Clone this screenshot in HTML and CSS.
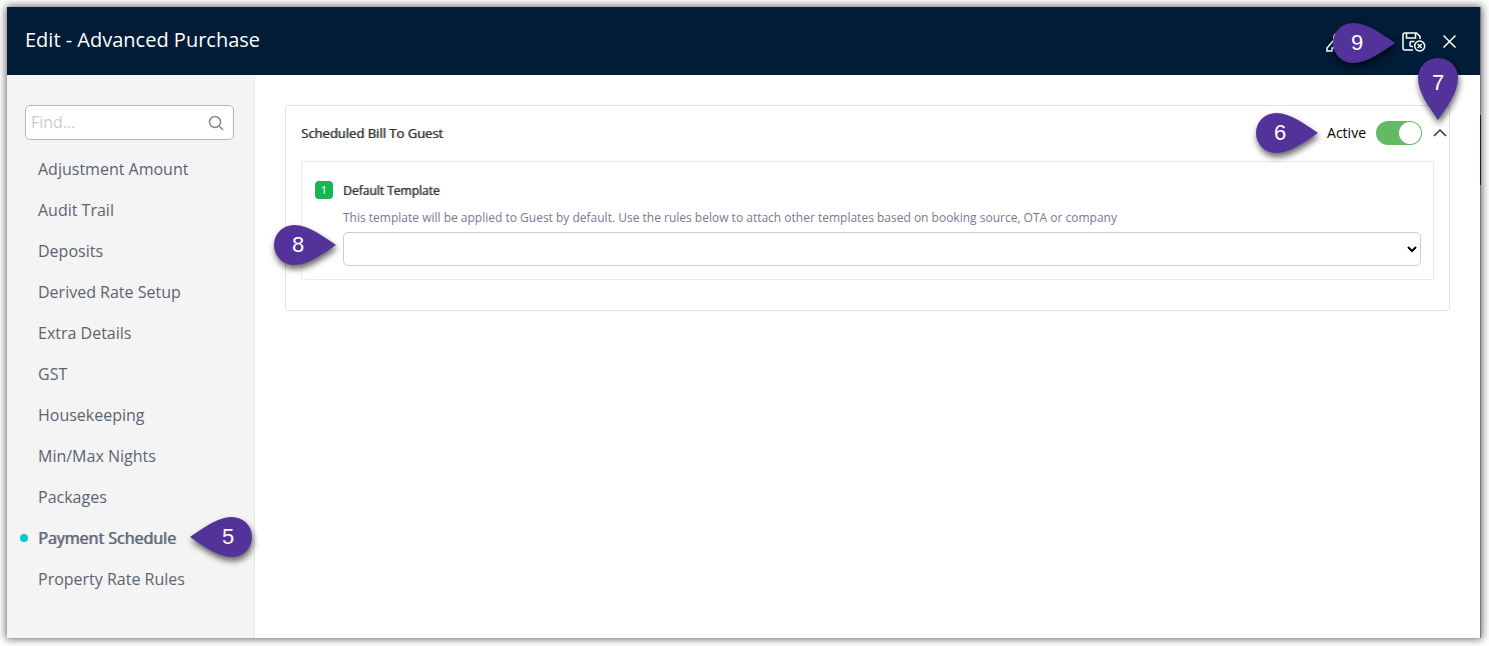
FILE: index.html
```html
<!DOCTYPE html>
<html lang="en">
<head>
    <meta charset="utf-8">
    <title>Edit - Advanced Purchase</title>
    <link rel="stylesheet" href="styles.css">
</head>

<body>
<svg class="defs" width="0" height="0">
    <symbol id="pin-right" viewBox="0 0 62 40">
        <path d="M62 20C50 12 35 0 20 0A20 20 0 0 0 20 40C35 40 50 28 62 20Z"/>
    </symbol>
    <symbol id="pin-left" viewBox="0 0 62 40">
        <path d="M0 20C12 12 27 0 42 0A20 20 0 0 1 42 40C27 40 12 28 0 20Z"/>
    </symbol>
    <symbol id="pin-down" viewBox="0 0 40 62">
        <path d="M20 62C12 50 0 35 0 20A20 20 0 0 1 40 20C40 35 28 50 20 62Z"/>
    </symbol>
</svg>

<div class="modal">
    <header class="modal-header">
        <h1>Edit - Advanced Purchase</h1>
        <div class="actions">
            <div class="anchor">
                <button class="icon-button" aria-label="Save">
                    <svg width="24" height="24" viewBox="0 0 24 24">
                        <path d="M13 4Q8 5 9 11L2 19V22H7V19H9V17L12 15"/>
                    </svg>
                </button>
                <div class="pin pin-right pin-save"><svg><use href="#pin-right"/></svg><span>9</span></div>
            </div>
            <button class="icon-button" aria-label="Save and exit">
                <svg width="24" height="24" viewBox="0 0 24 24">
                    <path d="M12 21H4Q2 21 2 19V6Q2 4 4 4H15.500L19 7.500V10M5.500 4V9H14.500V4"/>
                    <path d="M13.500 12.500H10.500Q9 12.500 9 14V16Q9 17.500 10.500 17.500H12"/>
                    <circle cx="18.700" cy="17" r="5"/>
                    <path d="M16.700 15L20.700 19M20.700 15L16.700 19"/>
                </svg>
            </button>
            <button class="icon-button" aria-label="Close">
                <svg width="24" height="24" viewBox="0 0 24 24">
                    <path d="M6.500 6.500L18.500 18.500M18.500 6.500L6.500 18.500"/>
                </svg>
            </button>
        </div>
    </header>

    <div class="modal-body">
        <aside class="sidebar">
            <div class="search">
                <input type="text" placeholder="Find..." aria-label="Find">
                <svg width="16" height="16" viewBox="0 0 16 16">
                    <circle cx="7" cy="7" r="5.500"/>
                    <path d="M11 11L15 15"/>
                </svg>
            </div>
            <nav class="menu">
                <a href="#">Adjustment Amount</a>
                <a href="#">Audit Trail</a>
                <a href="#">Deposits</a>
                <a href="#">Derived Rate Setup</a>
                <a href="#">Extra Details</a>
                <a href="#">GST</a>
                <a href="#">Housekeeping</a>
                <a href="#">Min/Max Nights</a>
                <a href="#">Packages</a>
                <div class="anchor">
                    <a href="#" class="active">Payment Schedule</a>
                    <div class="pin pin-left pin-menu"><svg><use href="#pin-left"/></svg><span>5</span></div>
                </div>
                <a href="#">Property Rate Rules</a>
            </nav>
        </aside>

        <main class="content">
            <section class="card">
                <div class="card-header">
                    <h2>Scheduled Bill To Guest</h2>
                    <div class="toggle anchor">
                        <label for="active">Active</label>
                        <input type="checkbox" class="switch" id="active" checked>
                        <div class="pin pin-right pin-active"><svg><use href="#pin-right"/></svg><span>6</span></div>
                    </div>
                    <div class="anchor">
                        <button class="collapse" aria-label="Collapse">
                            <svg width="14" height="10" viewBox="0 0 14 10">
                                <path d="M1 8L7 2L13 8"/>
                            </svg>
                        </button>
                        <div class="pin pin-down"><svg><use href="#pin-down"/></svg><span>7</span></div>
                    </div>
                </div>
                <div class="panel">
                    <span class="step">1</span>
                    <div class="field">
                        <label for="template">Default Template</label>
                        <p>This template will be applied to Guest by default. Use the rules below to attach other templates based on booking source, OTA or company</p>
                        <div class="anchor">
                            <select id="template"><option></option></select>
                            <div class="pin pin-right pin-template"><svg><use href="#pin-right"/></svg><span>8</span></div>
                        </div>
                    </div>
                </div>
            </section>
        </main>
    </div>
</div>
</body>
</html>
```
FILE: styles.css
```css
* {
    box-sizing: border-box;
}

body {
    margin: 0;
    padding: 7px 8px 8px 7px;
    min-height: 100vh;
    display: flex;
    background-color: #ffffff;
    font-family: "Open Sans", sans-serif;
    overflow-x: hidden;
}

.defs {
    position: absolute;
}

.modal {
    flex: 1;
    display: flex;
    flex-direction: column;
    position: relative;
    background-color: #ffffff;
    border-right: 1px solid #777777;
    box-shadow: 0 0 8px 1px #666666;
}

/* edge of the page behind the dialog */
.modal::after {
    content: "";
    position: absolute;
    right: -1px;
    top: 108px;
    width: 1px;
    height: 70px;
    background-color: #0c2033;
}

.modal-header {
    display: flex;
    justify-content: space-between;
    align-items: center;
    height: 68px;
    padding: 0 18px;
    background-color: #001c37;
    color: #ffffff;
}

.modal-header h1 {
    margin: 0;
    padding-bottom: 4px;
    font-size: 20px;
    font-weight: 400;
}

.actions {
    display: flex;
    gap: 12px;
    padding-right: 1px;
}

.actions .anchor {
    margin-right: 40px;
}

.anchor {
    position: relative;
}

.icon-button {
    display: block;
    width: 24px;
    height: 24px;
    padding: 0;
    border: 0;
    background: none;
    cursor: pointer;
}

svg {
    display: block;
}

.icon-button svg,
.search svg,
.collapse svg {
    fill: none;
    stroke: #ffffff;
    stroke-width: 1.5;
    overflow: visible;
}

.modal-body {
    flex: 1;
    display: flex;
}

.sidebar {
    width: 248px;
    padding: 30px 20px 0 18px;
    background-color: #f4f4f4;
    border-right: 1px solid #e8e8e8;
}

.search {
    display: flex;
    align-items: center;
    height: 35px;
    padding: 0 9px 0 5px;
    background-color: #ffffff;
    border: 1px solid #b5b5b5;
    border-radius: 5px;
}

.search input {
    flex: 1;
    min-width: 0;
    padding: 0 0 2px;
    border: 0;
    outline: none;
    background: none;
    font-family: inherit;
    font-size: 16px;
}

.search input::placeholder {
    color: #cccccc;
}

.search svg {
    stroke: #888888;
}

.menu {
    margin-top: 9px;
}

.menu a {
    display: block;
    padding-left: 13px;
    line-height: 41px;
    font-size: 16px;
    color: #5b6472;
    text-decoration: none;
}

.menu a.active {
    text-shadow: 1px 0 rgba(91, 100, 114, 0.7);
}

.menu a.active::before {
    content: "";
    position: absolute;
    left: -5px;
    top: 16px;
    width: 8px;
    height: 8px;
    border-radius: 50%;
    background-color: #00c8d7;
}

.content {
    flex: 1;
    padding: 30px;
}

.card {
    padding: 0 15px 30px;
    border: 1px solid #e0e1e5;
    border-radius: 3px;
}

.card-header {
    display: flex;
    align-items: center;
    height: 55px;
    margin-right: -13px;
    padding-bottom: 2px;
}

.card-header h2 {
    flex: 1;
    margin: 0;
    font-size: 13px;
    font-weight: 400;
    color: #333333;
    text-shadow: 1px 0 rgba(51, 51, 51, 0.6);
}

.toggle {
    display: flex;
    align-items: center;
    gap: 10px;
    margin-right: 11px;
    font-size: 14px;
}

.switch {
    appearance: none;
    width: 46px;
    height: 24px;
    margin: 0;
    padding: 1px;
    border-radius: 12px;
    background-color: #62bb62;
    cursor: pointer;
}

.switch::before {
    content: "";
    display: block;
    width: 22px;
    height: 22px;
    border-radius: 50%;
    background-color: #ffffff;
}

.switch:checked::before {
    margin-left: auto;
}

.collapse {
    display: block;
    padding: 0;
    border: 0;
    background: none;
    cursor: pointer;
}

.collapse svg {
    stroke: #333333;
}

.panel {
    display: flex;
    gap: 10px;
    padding: 19px 12px 13px 13px;
    border: 1px solid #ebebef;
}

.step {
    width: 18px;
    height: 18px;
    border-radius: 4px;
    background-color: #19b553;
    color: #ffffff;
    font-size: 11px;
    line-height: 18px;
    text-align: center;
}

.field {
    flex: 1;
}

.field label {
    display: block;
    font-size: 12px;
    line-height: 20px;
    color: #333333;
    text-shadow: 1px 0 rgba(51, 51, 51, 0.6);
}

.field p {
    margin: 8px 0 5px;
    font-size: 12px;
    line-height: 18px;
    color: #767b91;
}

.field select {
    display: block;
    width: 100%;
    height: 34px;
    border: 1px solid #cccccc;
    border-radius: 5px;
    background-color: #ffffff;
}

/* numbered callouts */
.pin {
    position: absolute;
    width: 62px;
    height: 40px;
    color: #ffffff;
    font-family: "Liberation Sans", Arial, sans-serif;
    font-size: 22px;
    line-height: 40px;
    text-align: center;
}

.pin svg {
    position: absolute;
    left: 0;
    top: 0;
    width: 100%;
    height: 100%;
    overflow: visible;
    fill: #533399;
    filter: drop-shadow(1px 4px 3px rgba(0, 0, 0, 0.6));
}

.pin span {
    position: relative;
}

.pin-right {
    padding-right: 14px;
}

.pin-left {
    padding-left: 14px;
}

.pin-down {
    left: -15px;
    bottom: 18px;
    width: 40px;
    height: 62px;
    line-height: 50px;
}

.pin-save {
    left: 8px;
    top: -6px;
}

.pin-menu {
    left: 165px;
    top: -1px;
}

.pin-active {
    right: 104px;
    top: -8px;
}

.pin-template {
    left: -69px;
    top: -7px;
}
```
